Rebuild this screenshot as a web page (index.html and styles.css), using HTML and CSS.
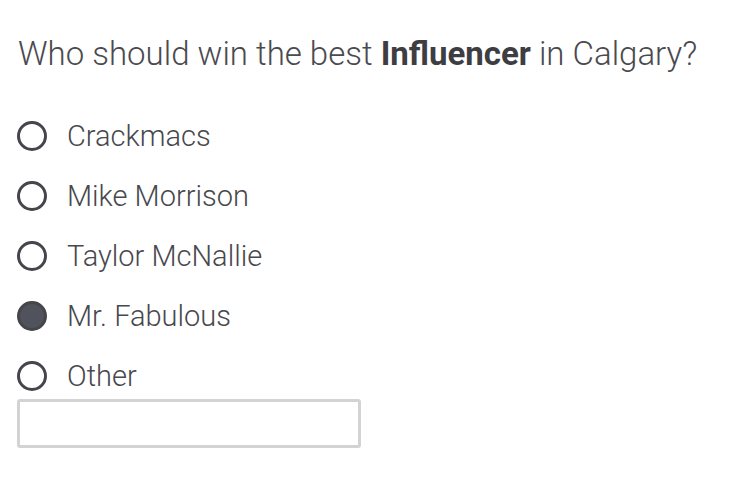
FILE: index.html
```html
<!DOCTYPE html>
<html>
<head>
<meta charset="utf-8">
<link rel="stylesheet" href="styles.css">
</head>
<body>
<div class="poll">
  <h1 class="question">Who should win the best <strong>Influencer</strong> in Calgary?</h1>
  <ul class="options">
    <li class="option"><span class="radio"></span><span class="label">Crackmacs</span></li>
    <li class="option"><span class="radio"></span><span class="label">Mike Morrison</span></li>
    <li class="option"><span class="radio"></span><span class="label">Taylor McNallie</span></li>
    <li class="option"><span class="radio checked"></span><span class="label">Mr. Fabulous</span></li>
    <li class="option"><span class="radio"></span><span class="label">Other</span></li>
  </ul>
  <div class="other-input"></div>
</div>
</body>
</html>
```
FILE: styles.css
```css
html, body {
  margin: 0;
  padding: 0;
  background: #ffffff;
}
body {
  font-family: Roboto, "Liberation Sans", sans-serif;
  color: #4a4a4f;
}
.poll {
  padding: 30px 0 0 18px;
}
.question {
  margin: 0;
  font-size: 33px;
  font-weight: 300;
  line-height: 48px;
  color: #4a4a4f;
}
.question strong {
  font-weight: 700;
  color: #3d3d42;
}
.options {
  list-style: none;
  margin: 39px 0 0 0;
  padding: 0;
  display: flex;
  flex-direction: column;
  gap: 22px;
}
.option {
  display: flex;
  align-items: center;
  height: 38px;
}
.radio {
  box-sizing: border-box;
  width: 30px;
  height: 30px;
  border: 3.5px solid #45464c;
  border-radius: 50%;
  margin-left: -1px;
  flex: none;
}
.radio.checked {
  background: #50525c;
  border-color: #45464c;
}
.label {
  margin-left: 20px;
  font-size: 29px;
  font-weight: 300;
  color: #48484d;
}
.other-input {
  box-sizing: border-box;
  margin-top: 4px;
  margin-left: -1px;
  width: 344px;
  height: 49px;
  border: 3px solid #d3d3d5;
  border-radius: 3px;
}
```
